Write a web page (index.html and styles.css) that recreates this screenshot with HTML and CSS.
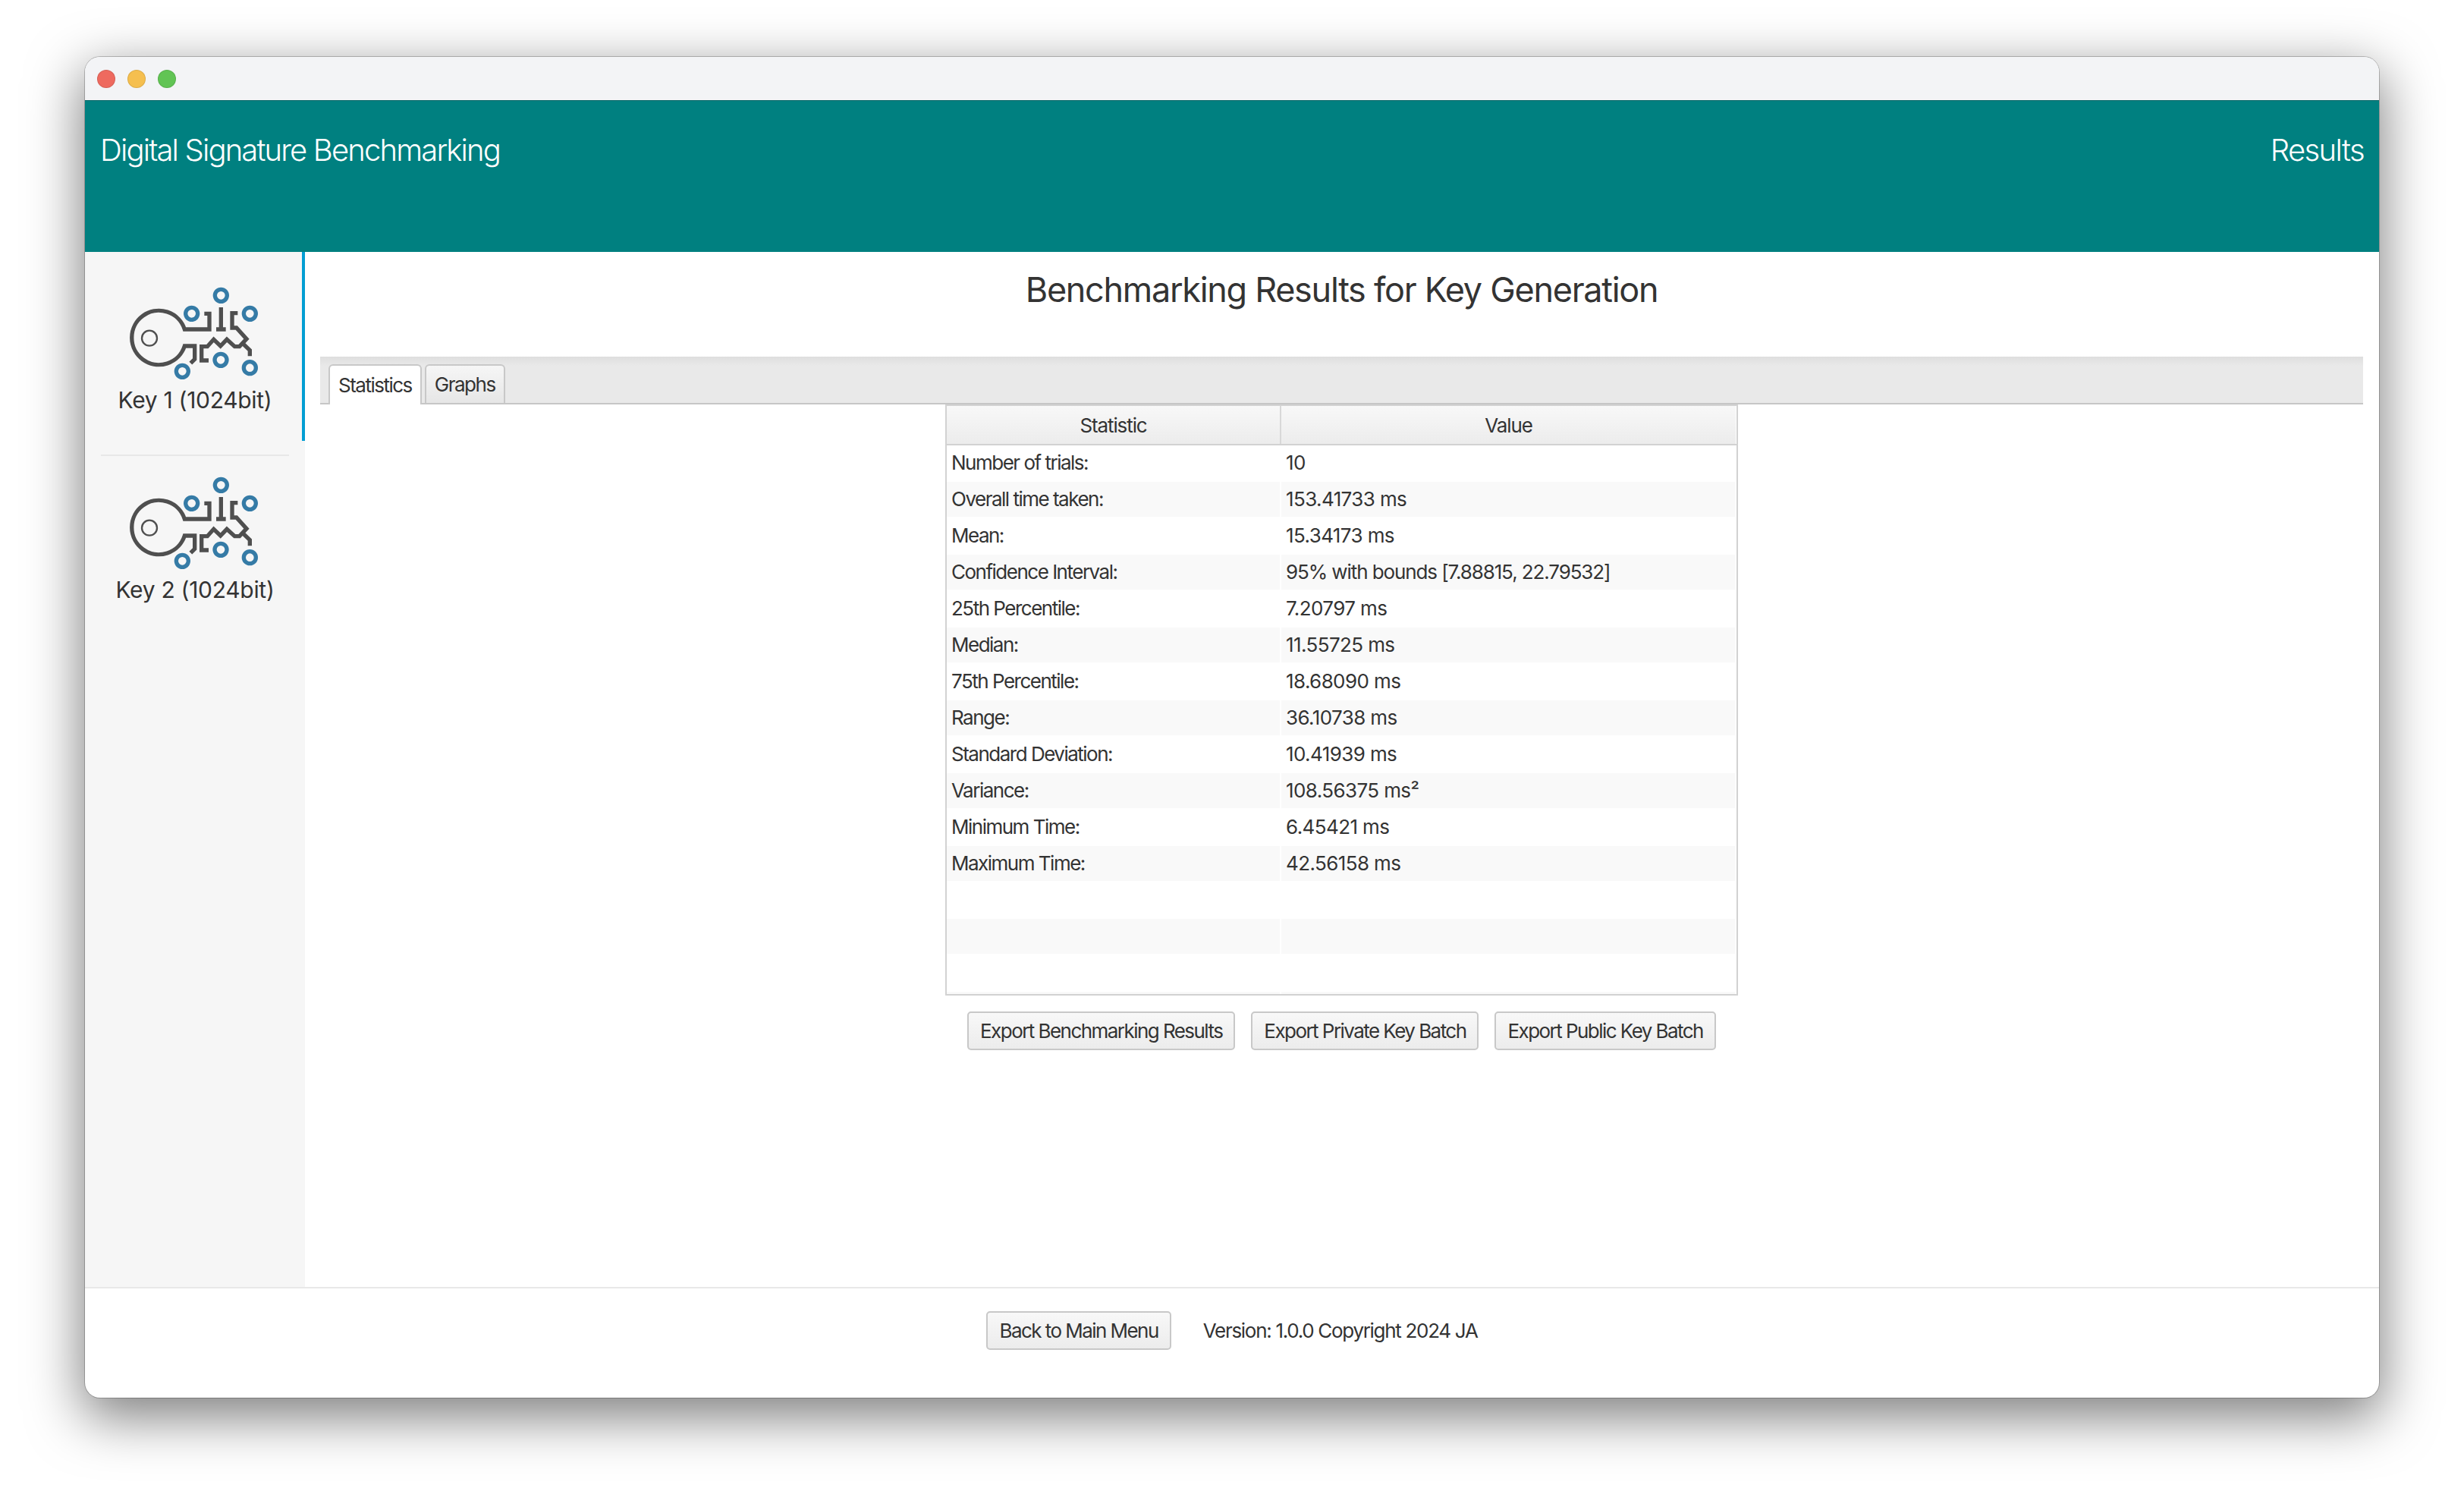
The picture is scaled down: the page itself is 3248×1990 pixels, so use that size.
FILE: index.html
```html
<!DOCTYPE html>
<html lang="en">
<head>
    <meta charset="UTF-8">
    <title>Digital Signature Benchmarking</title>
    <link rel="stylesheet" href="styles.css">
</head>
<body>
    <svg class="defs" width="0" height="0">
        <symbol id="keyIcon" viewBox="0 0 630 450">
            <g fill="none" stroke="#4f4f4f" stroke-width="16">
                <path d="M358 160H378V222H280A107 107 0 1 0 280 288H320V340L304 356"/>
                <circle cx="141" cy="257" r="30" stroke-width="7"/>
                <path d="M424 135V222M405 222H443"/>
                <path d="M375 345H347V290H370L395 262L422 288L447 262L478 290H497L525 260L485 216H468V158H490"/>
                <path d="M510 278L538 305V328"/>
            </g>
            <g fill="none" stroke="#357ba6" stroke-width="16">
                <circle cx="424" cy="88" r="24"/>
                <circle cx="308" cy="160" r="24"/>
                <circle cx="538" cy="160" r="24"/>
                <circle cx="423" cy="343" r="24"/>
                <circle cx="538" cy="374" r="24"/>
                <circle cx="271" cy="388" r="24"/>
            </g>
        </symbol>
    </svg>

    <div class="window">
        <div class="titlebar">
            <span class="light light-red"></span>
            <span class="light light-yellow"></span>
            <span class="light light-green"></span>
        </div>

        <div class="header">
            <div class="app-title">Digital Signature Benchmarking</div>
            <div class="page-title">Results</div>
        </div>

        <div class="middle">
            <!-- Key list -->
            <div class="sidebar">
                <div class="key-item key-selected">
                    <svg class="key-icon"><use href="#keyIcon"/></svg>
                    <div class="key-label">Key 1 (1024bit)</div>
                </div>
                <div class="key-sep"></div>
                <div class="key-item key-next">
                    <svg class="key-icon"><use href="#keyIcon"/></svg>
                    <div class="key-label">Key 2 (1024bit)</div>
                </div>
            </div>

            <div class="content">
                <div class="heading">Benchmarking Results for Key Generation</div>

                <div class="tabbar">
                    <div class="tab tab-active">Statistics</div>
                    <div class="tab">Graphs</div>
                </div>

                <!-- Stats table -->
                <div class="table-wrap">
                    <table>
                        <thead>
                            <tr><th class="col-stat">Statistic</th><th>Value</th></tr>
                        </thead>
                        <tbody>
                            <tr><td>Number of trials:</td><td>10</td></tr>
                            <tr><td>Overall time taken:</td><td>153.41733 ms</td></tr>
                            <tr><td>Mean:</td><td>15.34173 ms</td></tr>
                            <tr><td>Confidence Interval:</td><td class="mixed">95% with bounds [7.88815, 22.79532]</td></tr>
                            <tr><td>25th Percentile:</td><td>7.20797 ms</td></tr>
                            <tr><td>Median:</td><td>11.55725 ms</td></tr>
                            <tr><td>75th Percentile:</td><td>18.68090 ms</td></tr>
                            <tr><td>Range:</td><td>36.10738 ms</td></tr>
                            <tr><td>Standard Deviation:</td><td>10.41939 ms</td></tr>
                            <tr><td>Variance:</td><td>108.56375 ms²</td></tr>
                            <tr><td>Minimum Time:</td><td>6.45421 ms</td></tr>
                            <tr><td>Maximum Time:</td><td>42.56158 ms</td></tr>
                            <tr><td></td><td></td></tr>
                            <tr><td></td><td></td></tr>
                            <tr><td></td><td></td></tr>
                            <tr><td></td><td></td></tr>
                        </tbody>
                    </table>
                </div>

                <div class="export-row">
                    <button class="btn" type="button">Export Benchmarking Results</button>
                    <button class="btn" type="button">Export Private Key Batch</button>
                    <button class="btn" type="button">Export Public Key Batch</button>
                </div>
            </div>
        </div>

        <div class="footer">
            <button class="btn" type="button">Back to Main Menu</button>
            <span class="version">Version: 1.0.0 Copyright 2024 JA</span>
        </div>
    </div>
</body>
</html>
```

FILE: styles.css
```css
* {
    box-sizing: border-box;
}

html, body {
    height: 100%;
}

body {
    margin: 0;
    padding: 75px 112px 0;
    background-color: #ffffff;
    color: #333333;
    font-family: Inter, "Noto Sans", sans-serif;
    overflow: hidden;
}

.defs {
    position: absolute;
}

.window {
    width: 3024px;
    height: 1767px;
    display: flex;
    flex-direction: column;
    background-color: #ffffff;
    border-radius: 20px;
    overflow: hidden;
    box-shadow: 0 0 0 1px rgba(0, 0, 0, 0.22), 0 22px 70px 4px rgba(0, 0, 0, 0.5);
}

/* Title bar */
.titlebar {
    height: 57px;
    flex: none;
    display: flex;
    align-items: center;
    gap: 16px;
    padding-left: 16px;
    background-color: #f3f4f6;
}

.light {
    width: 24px;
    height: 24px;
    border-radius: 50%;
    border: 1px solid rgba(0, 0, 0, 0.1);
}

.light-red {
    background-color: #ee6a5f;
}

.light-yellow {
    background-color: #f5bf4f;
}

.light-green {
    background-color: #61c454;
}

/* Header */
.header {
    height: 200px;
    flex: none;
    display: flex;
    justify-content: space-between;
    padding: 41px 20px 0 20px;
    background-color: #008080;
    border-top: 1px solid #006464;
    color: #ffffff;
    font-size: 40px;
    line-height: 48px;
    font-weight: 300;
}

.app-title {
    letter-spacing: -1.85px;
}

.page-title {
    letter-spacing: -1.6px;
}

.middle {
    flex: 1;
    display: flex;
    min-height: 0;
}

/* Sidebar */
.sidebar {
    width: 290px;
    flex: none;
    background-color: #f6f6f6;
}

.key-item {
    height: 249px;
    padding-top: 28px;
    text-align: center;
}

.key-selected {
    border-right: 4px solid #039ed3;
}

.key-next {
    padding-top: 9px;
    padding-right: 4px;
}

.key-sep {
    height: 2px;
    margin: 18px 21px 0;
    background-color: #e8e8e8;
}

.key-icon {
    display: block;
    width: 210px;
    height: 150px;
    margin: 0 auto;
}

.key-label {
    margin-top: -1px;
    padding-left: 4px;
    font-size: 30px;
    line-height: 36px;
    font-weight: 400;
    letter-spacing: -0.3px;
}

/* Main content */
.content {
    flex: 1;
    min-width: 0;
    background-color: #ffffff;
    padding: 0 21px 0 20px;
}

.heading {
    height: 138px;
    padding-top: 22px;
    text-align: center;
    font-size: 45px;
    line-height: 56px;
    font-weight: 400;
    letter-spacing: -1.3px;
}

.tabbar {
    height: 63px;
    display: flex;
    align-items: flex-end;
    gap: 4px;
    padding-left: 11px;
    background: linear-gradient(to bottom, #dedede 0, #e9e9e9 12px);
    border-bottom: 2px solid #c6c6c6;
}

.tab {
    height: 51px;
    display: flex;
    align-items: center;
    padding: 0 11px;
    border: 2px solid #c8c8c8;
    border-bottom: none;
    border-radius: 6px 6px 0 0;
    background: linear-gradient(to bottom, #f6f6f6, #e6e6e6);
    font-size: 26px;
    letter-spacing: -1.5px;
}

.tab-active {
    height: 53px;
    margin-bottom: -2px;
    background: #ffffff;
}

/* Stats table */
.table-wrap {
    width: 1045px;
    height: 779px;
    margin: 0 auto;
    border: 2px solid #d2d2d2;
    overflow: hidden;
}

table {
    width: 100%;
    border-collapse: collapse;
    table-layout: fixed;
    font-size: 26px;
    letter-spacing: -0.6px;
}

th {
    height: 51px;
    padding: 0;
    font-weight: 400;
    letter-spacing: -1.1px;
    text-align: center;
    background: linear-gradient(to bottom, #f8f8f8, #ececec);
    border-bottom: 2px solid #d2d2d2;
    border-right: 2px solid #d8d8d8;
}

th:last-child {
    border-right: none;
}

.col-stat {
    width: 440px;
}

td {
    height: 48px;
    padding: 0 6px 2px;
    border-bottom: 2px solid #ffffff;
    border-right: 2px solid #ffffff;
    white-space: nowrap;
}

td:first-child {
    letter-spacing: -1.5px;
}

td.mixed {
    letter-spacing: -1.1px;
}

tbody tr:nth-child(even) td {
    background-color: #f9f9f9;
}

.export-row {
    display: flex;
    justify-content: center;
    gap: 21px;
    margin-top: 21px;
}

.btn {
    height: 51px;
    padding: 0 15px;
    border: 2px solid #c8c8c8;
    border-radius: 5px;
    background: linear-gradient(to bottom, #f8f8f8, #ececec);
    color: #333333;
    font-family: inherit;
    font-size: 26px;
    letter-spacing: -1.55px;
}

/* Footer */
.footer {
    height: 146px;
    flex: none;
    display: flex;
    align-items: center;
    justify-content: center;
    gap: 42px;
    padding-bottom: 33px;
    border-top: 2px solid #e8e8e8;
}

.version {
    font-size: 26px;
    letter-spacing: -1.3px;
}
```
